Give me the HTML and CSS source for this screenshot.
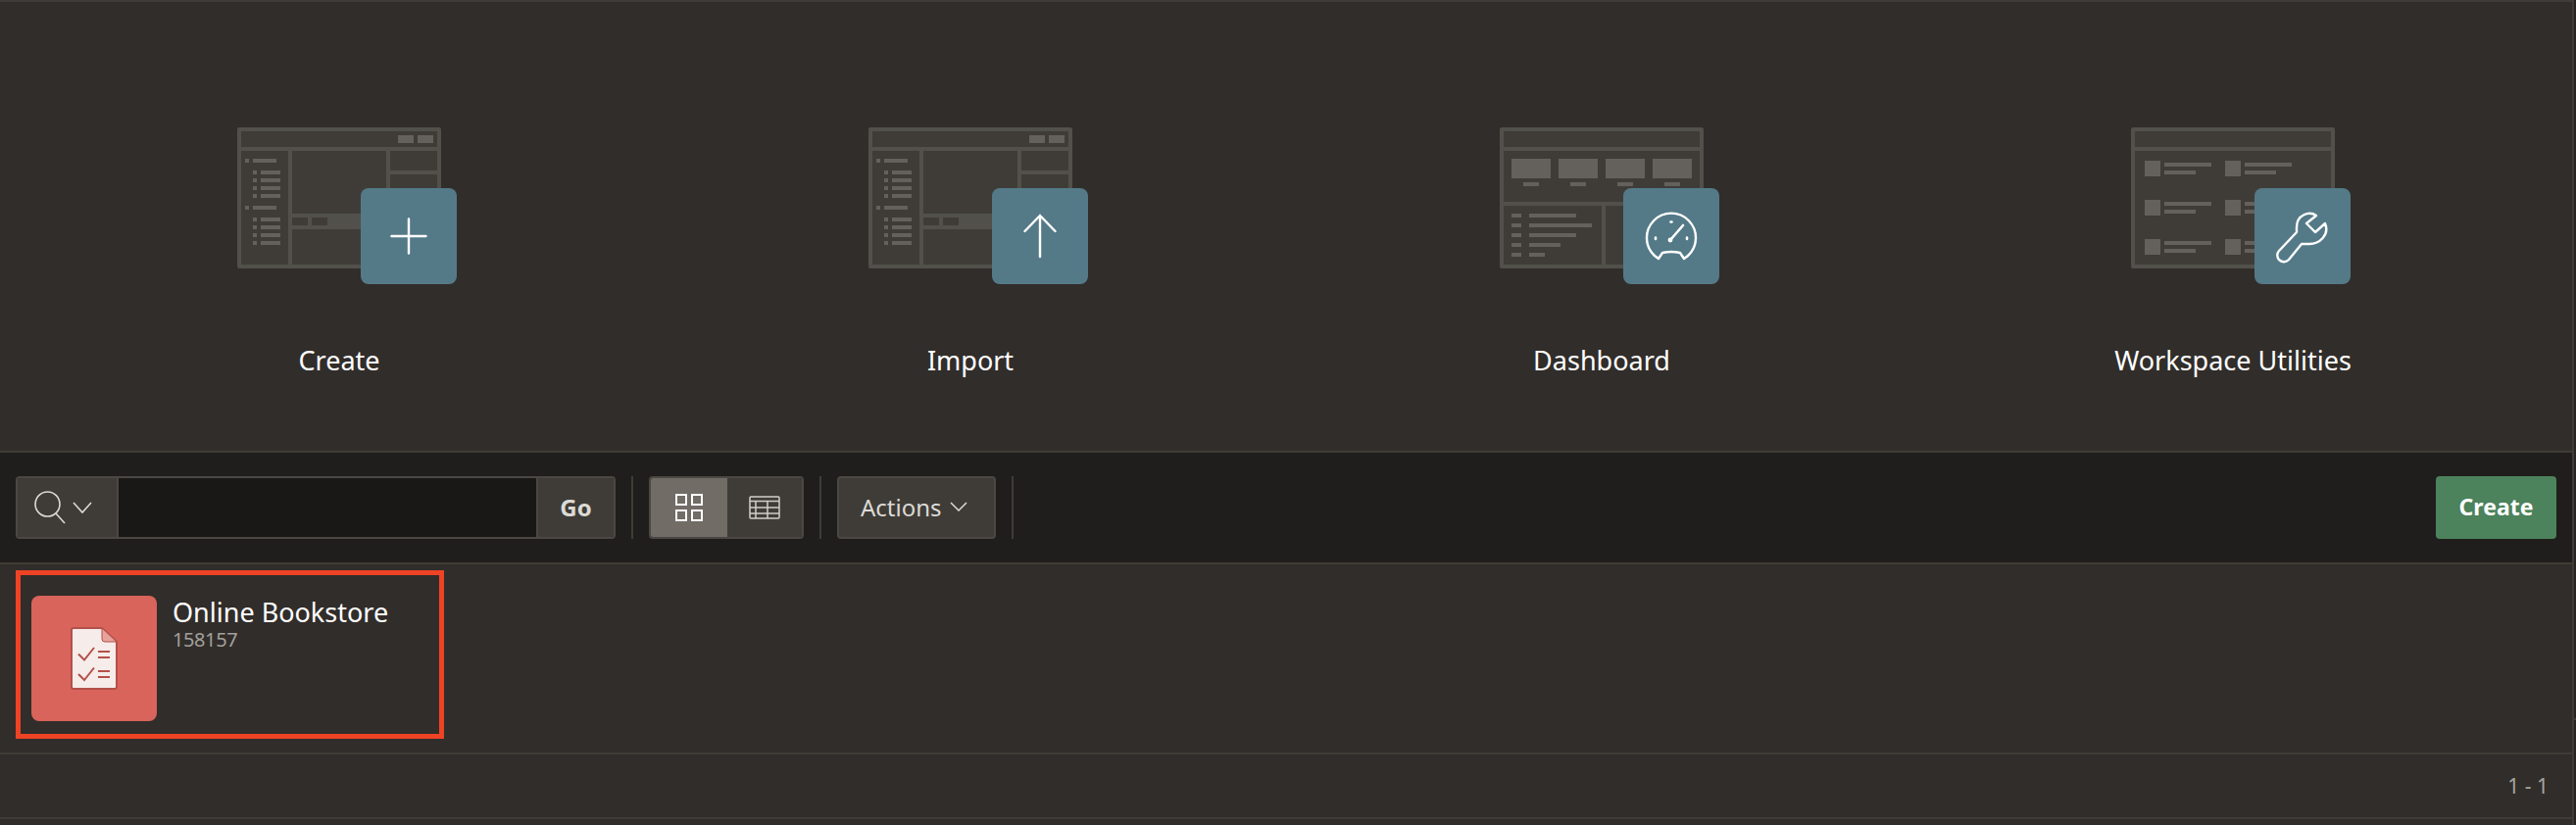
FILE: index.html
```html
<!DOCTYPE html>
<html lang="en">

<head>
    <meta charset="UTF-8">
    <title>App Builder</title>
    <link rel="stylesheet" href="styles.css">
</head>

<body>
    <svg class="defs" width="0" height="0">
        <defs>
            <symbol id="wire-editor" viewBox="0 0 208 144">
                <rect width="208" height="144" rx="2" fill="#52504a" />
                <rect x="4" y="4" width="200" height="16" fill="#3f3c37" />
                <rect x="164" y="8" width="16" height="8" fill="#64615c" />
                <rect x="184" y="8" width="16" height="8" fill="#64615c" />
                <rect x="4" y="24" width="48" height="116" fill="#3f3c37" />
                <rect x="56" y="24" width="96" height="64" fill="#3f3c37" />
                <rect x="56" y="104" width="96" height="36" fill="#3f3c37" />
                <rect x="56" y="92" width="16" height="8" fill="#3f3c37" />
                <rect x="76" y="92" width="16" height="8" fill="#3f3c37" />
                <rect x="156" y="24" width="48" height="20" fill="#3f3c37" />
                <rect x="156" y="48" width="48" height="92" fill="#3f3c37" />
                <g fill="#64615c">
                    <rect x="8" y="32" width="4" height="4" /><rect x="16" y="32" width="24" height="4" />
                    <rect x="16" y="44" width="4" height="4" /><rect x="24" y="44" width="20" height="4" />
                    <rect x="16" y="52" width="4" height="4" /><rect x="24" y="52" width="20" height="4" />
                    <rect x="16" y="60" width="4" height="4" /><rect x="24" y="60" width="20" height="4" />
                    <rect x="16" y="68" width="4" height="4" /><rect x="24" y="68" width="20" height="4" />
                    <rect x="8" y="80" width="4" height="4" /><rect x="16" y="80" width="24" height="4" />
                    <rect x="16" y="92" width="4" height="4" /><rect x="24" y="92" width="20" height="4" />
                    <rect x="16" y="100" width="4" height="4" /><rect x="24" y="100" width="20" height="4" />
                    <rect x="16" y="108" width="4" height="4" /><rect x="24" y="108" width="20" height="4" />
                    <rect x="16" y="116" width="4" height="4" /><rect x="24" y="116" width="20" height="4" />
                </g>
            </symbol>
            <symbol id="wire-dash" viewBox="0 0 208 144">
                <rect width="208" height="144" rx="2" fill="#52504a" />
                <rect x="4" y="4" width="200" height="16" fill="#3f3c37" />
                <rect x="4" y="24" width="200" height="52" fill="#3f3c37" />
                <rect x="4" y="80" width="100" height="60" fill="#3f3c37" />
                <rect x="108" y="80" width="96" height="60" fill="#3f3c37" />
                <g fill="#64615c">
                    <rect x="12" y="32" width="40" height="20" /><rect x="60" y="32" width="40" height="20" />
                    <rect x="108" y="32" width="40" height="20" /><rect x="156" y="32" width="40" height="20" />
                    <rect x="24" y="56" width="16" height="4" /><rect x="72" y="56" width="16" height="4" />
                    <rect x="120" y="56" width="16" height="4" /><rect x="168" y="56" width="16" height="4" />
                    <rect x="12" y="88" width="10" height="4" /><rect x="30" y="88" width="48" height="4" />
                    <rect x="12" y="98" width="10" height="4" /><rect x="30" y="98" width="64" height="4" />
                    <rect x="12" y="108" width="10" height="4" /><rect x="30" y="108" width="48" height="4" />
                    <rect x="12" y="118" width="10" height="4" /><rect x="30" y="118" width="32" height="4" />
                    <rect x="12" y="128" width="10" height="4" /><rect x="30" y="128" width="16" height="4" />
                </g>
            </symbol>
            <symbol id="wire-cards" viewBox="0 0 208 144">
                <rect width="208" height="144" rx="2" fill="#52504a" />
                <rect x="4" y="4" width="200" height="16" fill="#3f3c37" />
                <rect x="4" y="24" width="200" height="116" fill="#3f3c37" />
                <g fill="#64615c">
                    <rect x="14" y="34" width="16" height="16" /><rect x="34" y="36" width="48" height="4" /><rect x="34" y="44" width="32" height="4" />
                    <rect x="96" y="34" width="16" height="16" /><rect x="116" y="36" width="48" height="4" /><rect x="116" y="44" width="32" height="4" />
                    <rect x="14" y="74" width="16" height="16" /><rect x="34" y="76" width="48" height="4" /><rect x="34" y="84" width="32" height="4" />
                    <rect x="96" y="74" width="16" height="16" /><rect x="116" y="76" width="48" height="4" /><rect x="116" y="84" width="32" height="4" />
                    <rect x="14" y="114" width="16" height="16" /><rect x="34" y="116" width="48" height="4" /><rect x="34" y="124" width="32" height="4" />
                    <rect x="96" y="114" width="16" height="16" /><rect x="116" y="116" width="48" height="4" /><rect x="116" y="124" width="32" height="4" />
                </g>
            </symbol>
        </defs>
    </svg>

    <main class="page">
        <section class="tiles">
            <a class="tile">
                <span class="tile-art">
                    <svg class="wire"><use href="#wire-editor" /></svg>
                    <span class="badge">
                        <svg width="98" height="98" viewBox="0 0 98 98" fill="none" stroke="#fff" stroke-width="2.4" stroke-linecap="round">
                            <path d="M49 31.500v35M31.500 49h35" />
                        </svg>
                    </span>
                </span>
                <span class="tile-label">Create</span>
            </a>
            <a class="tile">
                <span class="tile-art">
                    <svg class="wire"><use href="#wire-editor" /></svg>
                    <span class="badge">
                        <svg width="98" height="98" viewBox="0 0 98 98" fill="none" stroke="#fff" stroke-width="2.4" stroke-linecap="round">
                            <path d="M49 70V28M33.500 44L49 28l15.500 16" />
                        </svg>
                    </span>
                </span>
                <span class="tile-label">Import</span>
            </a>
            <a class="tile">
                <span class="tile-art">
                    <svg class="wire"><use href="#wire-dash" /></svg>
                    <span class="badge">
                        <svg width="98" height="98" viewBox="0 0 98 98" fill="none" stroke="#fff" stroke-width="2.4" stroke-linecap="round" stroke-linejoin="round">
                            <path d="M32 69a25 25 0 1 1 34 0l-4 3-4-6q-9-2-18 0l-4 6z" />
                            <path d="M48 53l13-15" stroke-width="2.6" />
                            <circle cx="48" cy="53" r="2.400" fill="#fff" stroke="none" />
                            <path d="M48.500 34.500h1M33 50.500v1.500M65 50.500v1.500" stroke-width="2.6" />
                        </svg>
                    </span>
                </span>
                <span class="tile-label">Dashboard</span>
            </a>
            <a class="tile">
                <span class="tile-art">
                    <svg class="wire"><use href="#wire-cards" /></svg>
                    <span class="badge">
                        <svg width="98" height="98" viewBox="0 0 98 98" fill="none" stroke="#fff" stroke-width="2.4" stroke-linecap="round" stroke-linejoin="round">
                            <path d="M63 28C56 23 43 27 43 40v5L25 64a6.500 6.500 0 0 0 10 9l13-16h8C66 57 77 48 72 36l-10 9-9-9z" />
                        </svg>
                    </span>
                </span>
                <span class="tile-label">Workspace Utilities</span>
            </a>
        </section>

        <section class="toolbar">
            <div class="search">
                <button class="search-type">
                    <svg width="60" height="34" viewBox="0 0 60 34" fill="none" stroke="#dcdad6" stroke-width="1.6">
                        <circle cx="13.500" cy="13.500" r="12.500" />
                        <path d="M22 23l9 10M40 12l9 10 9-10" />
                    </svg>
                </button>
                <div class="search-input"></div>
                <button class="search-go">Go</button>
            </div>
            <div class="sep"></div>
            <div class="views">
                <button class="view view-on">
                    <svg width="28" height="28" viewBox="0 0 28 28" fill="none" stroke="#fff" stroke-width="2">
                        <path d="M1 1h10v10H1zM17 1h10v10H17zM1 17h10v10H1zM17 17h10v10H17z" />
                    </svg>
                </button>
                <button class="view">
                    <svg width="32" height="24" viewBox="0 0 32 24" fill="none" stroke="#d0cec9" stroke-width="1.500">
                        <rect x="1" y="1" width="30" height="22" rx="1" />
                        <path d="M1 5.500h30M1 12h30M1 18h30M7 5.500V23M19 5.500V23" />
                    </svg>
                </button>
            </div>
            <div class="sep"></div>
            <button class="actions">Actions
                <svg width="18" height="10" viewBox="0 0 18 10" fill="none" stroke="#dcdad6" stroke-width="1.500">
                    <path d="M1 1l8 8 8-8" />
                </svg>
            </button>
            <div class="sep"></div>
            <button class="btn-create">Create</button>
        </section>

        <section class="cards">
            <a class="card">
                <span class="card-icon">
                    <svg width="48" height="64" viewBox="0 0 48 64">
                        <path d="M3 1h29l15 14v46a2 2 0 0 1-2 2H3a2 2 0 0 1-2-2V3a2 2 0 0 1 2-2z" fill="#f6ecea" stroke="#b4504a" stroke-width="2" />
                        <path d="M32 1v11a3 3 0 0 0 3 3h12z" fill="#e8a29c" stroke="#b4504a" stroke-width="1" />
                        <g fill="none" stroke="#b4504a" stroke-width="2">
                            <path d="M8 27.500l6 6 10-12.500M28 25h12M28 31h12" />
                            <path d="M8 48l6 6 10-12.500M28 45h12M28 51h12" />
                        </g>
                    </svg>
                </span>
                <span class="card-text">
                    <span class="card-title">Online Bookstore</span>
                    <span class="card-id">158157</span>
                </span>
            </a>
        </section>

        <footer class="pager">1 - 1</footer>
    </main>
</body>

</html>
```

FILE: styles.css
```css
* {
    box-sizing: border-box;
}

html,
body {
    height: 100%;
}

body {
    margin: 0;
    background-color: #262422;
    color: #fff;
    font-family: "Noto Sans", "Open Sans", sans-serif;
    overflow: hidden;
}

.defs {
    display: block;
}

button {
    font-family: inherit;
    border: none;
    padding: 0;
    color: inherit;
}

.page {
    position: relative;
    width: 2626px;
    height: 842px;
    background-color: #312d2a;
    border-top: 2px solid #3f3c37;
    border-right: 2px solid #3f3c37;
}

/* small tick on the scroll edge */
.page::after {
    content: "";
    position: absolute;
    right: -4px;
    top: 731px;
    width: 2px;
    height: 2px;
    background-color: #3f3c37;
}

.tiles {
    height: 458px;
    padding: 128px 24px 0;
    display: grid;
    grid-template-columns: repeat(4, 644px);
}

.tile {
    display: flex;
    flex-direction: column;
    align-items: center;
}

.tile-art {
    position: relative;
    display: block;
    width: 208px;
    height: 144px;
}

.wire {
    display: block;
    width: 208px;
    height: 144px;
}

.badge {
    position: absolute;
    left: 126px;
    top: 62px;
    width: 98px;
    height: 98px;
    border-radius: 8px;
    background-color: #547a88;
}

.badge svg {
    display: block;
}

.tile-label {
    margin-top: 76px;
    font-size: 27px;
    line-height: 36px;
    color: #fff;
}

.toolbar {
    height: 116px;
    padding: 24px 16px 0;
    display: flex;
    align-items: flex-start;
    background-color: #1f1e1c;
    border-top: 2px solid #3f3c37;
    border-bottom: 2px solid #3f3c37;
}

.search {
    display: flex;
    width: 612px;
    height: 64px;
    border: 2px solid #4b4843;
    border-radius: 4px;
    overflow: hidden;
}

.search-type {
    width: 103px;
    display: flex;
    align-items: center;
    padding-left: 17px;
    background-color: #3f3c37;
    border-right: 2px solid #4b4843;
}

.search-input {
    flex: 1;
    background-color: #191816;
}

.search-go {
    width: 79px;
    padding-bottom: 2px;
    background-color: #3f3c37;
    border-left: 2px solid #4b4843;
    color: #dcdad6;
    font-size: 24px;
    font-weight: 700;
}

.sep {
    width: 2px;
    height: 64px;
    margin-left: 16px;
    background-color: #3f3c37;
}

.views {
    display: flex;
    width: 158px;
    height: 64px;
    margin-left: 16px;
    border: 2px solid #4b4843;
    border-radius: 4px;
    overflow: hidden;
}

.view {
    flex: 1;
    display: flex;
    align-items: center;
    justify-content: center;
    background-color: #3f3c37;
}

.view-on {
    flex: none;
    width: 78px;
    background-color: #716c66;
}

.actions {
    display: flex;
    align-items: center;
    gap: 8px;
    width: 162px;
    height: 64px;
    margin-left: 16px;
    padding: 0 0 2px 22px;
    background-color: #3f3c37;
    border: 2px solid #4b4843;
    border-radius: 4px;
    color: #dcdad6;
    font-size: 24px;
}

.btn-create {
    width: 123px;
    height: 64px;
    margin-left: auto;
    padding-bottom: 2px;
    background-color: #4c825c;
    border-radius: 4px;
    color: #fff;
    font-size: 23px;
    font-weight: 700;
}

.cards {
    height: 194px;
    padding: 6px 16px 0;
    border-bottom: 2px solid #3f3c37;
}

.card {
    display: flex;
    width: 437px;
    height: 172px;
    padding: 21px 11px;
    gap: 16px;
    border: 5px solid #ee4325;
}

.card-icon {
    display: flex;
    flex: none;
    align-items: center;
    justify-content: center;
    width: 128px;
    height: 128px;
    border-radius: 8px;
    background-color: #d9645b;
}

.card-text {
    display: flex;
    flex-direction: column;
}

.card-title {
    font-size: 27px;
    line-height: 33px;
    color: #fff;
}

.card-id {
    font-size: 20px;
    line-height: 24px;
    letter-spacing: -0.4px;
    color: #a3a09b;
}

.pager {
    height: 66px;
    padding: 0 24px;
    display: flex;
    align-items: center;
    justify-content: flex-end;
    border-bottom: 2px solid #3f3c37;
    font-size: 21px;
    color: #a8a5a0;
}
```
